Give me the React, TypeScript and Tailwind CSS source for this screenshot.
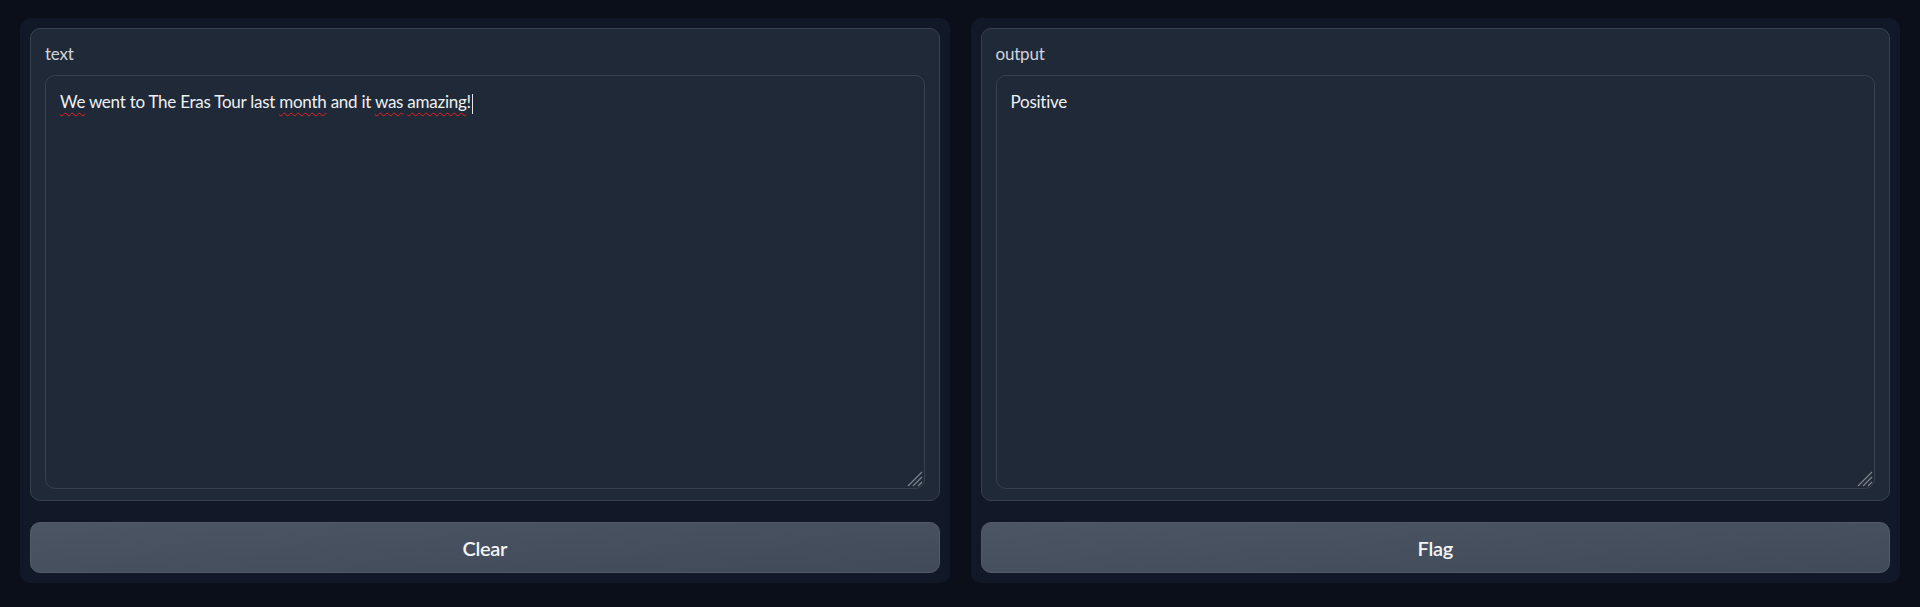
const font = { fontFamily: '"Source Sans Pro", Lato, "Noto Sans", sans-serif' };

const ResizeGrip = () => (
    <svg className="absolute right-[1px] bottom-[1px]" width="17" height="17" viewBox="0 0 17 17">
        <line x1="16" y1="2" x2="2" y2="16" stroke="#7c828c" strokeWidth="1.3" />
        <line x1="16" y1="7" x2="7" y2="16" stroke="#7c828c" strokeWidth="1.3" />
        <line x1="16" y1="12" x2="12" y2="16" stroke="#7c828c" strokeWidth="1.3" />
    </svg>
);

const Typo = ({ children }: { children: string }) => (
    <span className="underline decoration-wavy decoration-[#ef2020] decoration-1 underline-offset-[4px]">{children}</span>
);

interface PanelProps {
    label: string;
    button: string;
    children: React.ReactNode;
}

const Panel = ({ label, button, children }: PanelProps) => (
    <div className="flex-1 h-[565px] bg-[#111827] rounded-[10px] p-[10px] flex flex-col gap-[21px]">
        <div className="flex-1 flex flex-col bg-[#1f2937] border border-[#374151] rounded-[10px] pt-[14px] px-[14px] pb-[11px]">
            <span className="text-[17px] tracking-[-0.2px] leading-[22px] text-[#d1d5db] mb-[10px]">{label}</span>
            <div className="relative flex-1 bg-[#1f2937] border border-[#374151] rounded-[10px] px-[14px] pt-[13px] text-[17px] tracking-[-0.25px] leading-[26px] text-[#eef0f3]">
                {children}
                <ResizeGrip />
            </div>
        </div>
        <button className="h-[51px] shrink-0 rounded-[10px] border border-[#535b69] bg-gradient-to-br from-[#4b5563] to-[#414a58] text-[20px] tracking-[-0.3px] font-semibold text-[#f3f4f6]">
            {button}
        </button>
    </div>
);

export default function App() {
    return (
        <div className="w-full h-[607px] bg-[#0b0f19] px-[20px] pt-[18px] flex gap-[21px]" style={font}>
            <Panel label="text" button="Clear">
                <span>
                    <Typo>We</Typo> went to The Eras Tour last <Typo>month</Typo> and it <Typo>was</Typo>{' '}
                    <Typo>amazing</Typo>!
                </span>
                <span className="inline-block w-px h-[20px] bg-[#e5e7eb] align-middle ml-px" />
            </Panel>
            <Panel label="output" button="Flag">
                Positive
            </Panel>
        </div>
    );
}
